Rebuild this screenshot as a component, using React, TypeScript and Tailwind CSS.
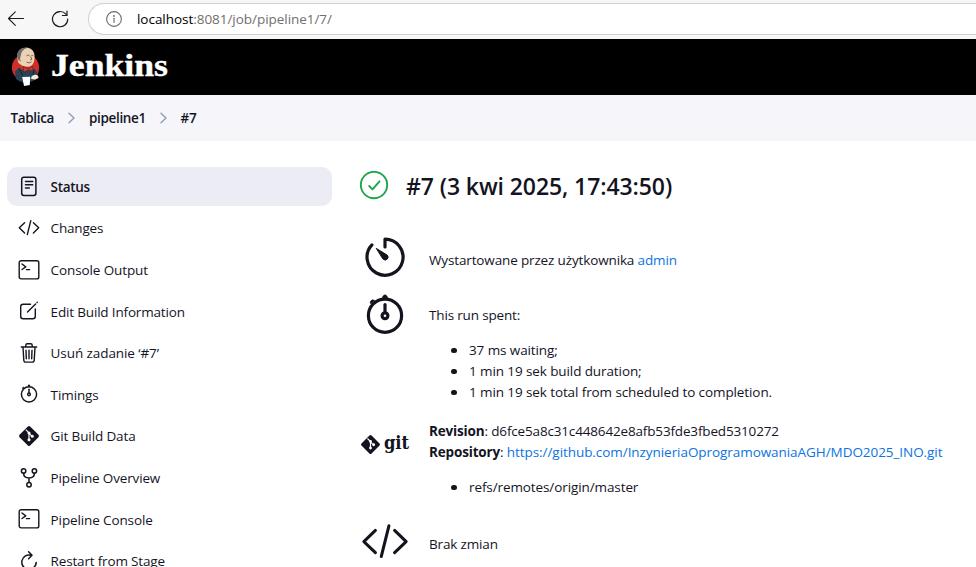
import type { ReactNode } from "react";

type IconProps = { className?: string };

const stroke = {
  fill: "none",
  stroke: "currentColor",
  strokeLinecap: "round" as const,
  strokeLinejoin: "round" as const,
};

function BackIcon() {
  return (
    <svg className="h-4 w-4" viewBox="0 0 16 16" {...stroke} strokeWidth="1.1">
      <path d="M15.5 7.500H.8M7.3 .8.5 7.500l6.8 6.8" />
    </svg>
  );
}

function ReloadIcon() {
  return (
    <svg className="h-[18px] w-[18px]" viewBox="0 0 18 18" {...stroke} strokeWidth="1.2">
      <path d="M16.7 9A7.6 7.6 0 1 1 14.9 4.2M16 1v4.5h-4.6" />
    </svg>
  );
}

function InfoIcon() {
  return (
    <svg className="h-4 w-4 text-[#6b6b6b]" viewBox="0 0 16 16" {...stroke} strokeWidth="1.1">
      <circle cx="8" cy="8" r="7.4" />
      <path d="M8 7.2v4.2" />
      <circle cx="8" cy="4.9" r=".4" fill="currentColor" />
    </svg>
  );
}

function JenkinsLogo() {
  return (
    <svg className="h-10 w-[30px]" viewBox="0 0 30 40">
      <circle cx="14.500" cy="20.500" r="13.600" fill="#cf2f2b" />
      <path d="M5 32 3.800 24.500 8 21l6 3 7-3 4 2 1.500 5-1 4-4.500 2.500-9 1-4-1.500z" fill="#2a4353" />
      <path d="M7.500 16C5 10 6 3.500 11.500 1.300c6-1.800 11.500.7 12 7.200.3 5-.8 8.500-3.500 10.500-3 1.500-8 1-12.500-3z" fill="#ecd2b3" />
      <path d="M7.300 13.500C4.800 9 6.300 3 11 1.300c2-.8 4-.9 5.800-.3-3.600.6-4.800 1.900-6.100 4.200-.8 1.800-.8 3.500-1.400 5.300z" fill="#6d6b6d" />
      <path d="M15.500 8.800c1-1 2.500-.8 3.200.2M20.300 8.800c.8-.7 1.500-.5 2 0M15.500 15c2 1.300 3.500 1 5-.2M19.800 9.500l.9 3-1.500.4M9.300 11.500c-1.500 0-1 2.500.6 2.500" fill="none" stroke="#5b4437" strokeWidth=".8" />
      <path d="m12.300 19.600 4.700 2.100 4.700-2.300.3 4.500-4.600-1-4.600 2.400z" fill="#d33833" stroke="#3b1b1b" strokeWidth=".5" />
      <path d="m8 21 3.500 7.500M23 23.500l-1 4.500" fill="none" stroke="#132530" strokeWidth="1" />
      <path d="m11.200 30 8-.3-.4 8.300-5.800 1z" fill="#fff" />
      <path d="M20.500 29.500c2-2 5-2.500 6.500-.8l.6 2.300-3.500 1.500-4-.6z" fill="#f5e9df" />
    </svg>
  );
}

function Chevron() {
  return (
    <svg className="h-3 w-[7px] text-[#8d9bb0]" viewBox="0 0 7 12" {...stroke} strokeWidth="1.3">
      <path d="m1 1.200 5 4.800-5 4.800" />
    </svg>
  );
}

function DocIcon({ className }: IconProps) {
  return (
    <svg className={className} viewBox="0 0 22 22" {...stroke} strokeWidth="1.5">
      <rect x="3.700" y="1.300" width="14.200" height="18.200" rx="2.200" />
      <path d="M7.500 5.500h7.200M7.500 8.800h7.200M7.500 12.100h3.800" />
    </svg>
  );
}

function CodeIcon({ className }: IconProps) {
  return (
    <svg className={className} viewBox="0 0 22 22" {...stroke} strokeWidth="1.400">
      <path d="M6.600 5.700 1.300 10.800l5.300 5.100M15.400 5.700l5.300 5.100-5.300 5.100M12.800 3.600 9.300 17.600" />
    </svg>
  );
}

function TerminalIcon({ className }: IconProps) {
  return (
    <svg className={className} viewBox="0 0 22 22" {...stroke} strokeWidth="1.400">
      <rect x="1.200" y="1.700" width="19.600" height="18.200" rx="2" />
      <path d="m4 5 3.800 2.900L4 10.500M8.400 10.600h3.200" />
    </svg>
  );
}

function EditIcon({ className }: IconProps) {
  return (
    <svg className={className} viewBox="0 0 22 22" {...stroke} strokeWidth="1.400">
      <path d="M12.500 4.200H5.200a2.500 2.500 0 0 0-2.500 2.500v9.600a2.500 2.500 0 0 0 2.500 2.500h9.600a2.500 2.500 0 0 0 2.500-2.500V9M9.500 12l8.100-8.100M19 2.500l.2-.2" />
    </svg>
  );
}

function TrashIcon({ className }: IconProps) {
  return (
    <svg className={className} viewBox="0 0 22 22" {...stroke} strokeWidth="1.400">
      <path d="M3.300 5h15.400M5 5.300l.8 12.900a2 2 0 0 0 2 1.900h6.400a2 2 0 0 0 2-1.900L17 5.300M7.800 4.800V3.200a1.400 1.400 0 0 1 1.400-1.400h3.600a1.400 1.400 0 0 1 1.400 1.400v1.600M11 8.300v8.500M8 8.300l.3 8.500M14 8.300l-.3 8.500" />
    </svg>
  );
}

function StopwatchIcon({ className }: IconProps) {
  return (
    <svg className={className} viewBox="0 0 48 48" {...stroke} strokeWidth="3.200">
      <circle cx="24" cy="24.700" r="16.600" />
      <circle cx="24" cy="24.700" r="2.900" />
      <path d="M24 13.500v8" />
      <path d="M21.800 7a2.300 2.300 0 1 1 4.400 0zM10 13a2 2 0 1 1 3.600-3.200z" fill="currentColor" strokeWidth="1" />
    </svg>
  );
}

function TimerIcon({ className }: IconProps) {
  return (
    <svg className={className} viewBox="0 0 48 48" {...stroke} strokeWidth="3.200">
      <path d="M10.900 11.900A18 18 0 1 0 24 6.200V14" />
      <path d="m15.600 15.600 10.500 6.400a2.900 2.900 0 1 1-4.100 4.100z" fill="currentColor" strokeWidth="1" />
    </svg>
  );
}

function GitMark({ className }: IconProps) {
  return (
    <svg className={className} viewBox="0 0 22 22">
      <rect x="3.500" y="3.500" width="15" height="15" rx="1.600" transform="rotate(45 11 11)" fill="currentColor" />
      <path d="m7.800 4.700 3.200 3.200v6.800M11 8.200l3.100 3.100" fill="none" stroke="#fff" strokeWidth="1.200" />
      <circle cx="11" cy="7.900" r="1.500" fill="#fff" />
      <circle cx="11" cy="14.700" r="1.500" fill="#fff" />
      <circle cx="14.300" cy="11.300" r="1.500" fill="#fff" />
    </svg>
  );
}

function ForkIcon({ className }: IconProps) {
  return (
    <svg className={className} viewBox="0 0 22 22" {...stroke} strokeWidth="1.500">
      <circle cx="5.600" cy="4" r="2.200" />
      <circle cx="16.400" cy="4" r="2.200" />
      <circle cx="11" cy="17.700" r="2.200" />
      <path d="M5.600 6.300c0 3.700 2.200 4.700 5.400 4.700s5.400-1 5.400-4.700M11 11v4.400" />
    </svg>
  );
}

function RestartIcon({ className }: IconProps) {
  return (
    <svg className={className} viewBox="0 0 22 22" {...stroke} strokeWidth="1.500">
      <path d="M13.200 5.300A7.200 7.200 0 1 0 18.200 12.400M10.600 1.800l3.400 3.500-3.400 3.500" />
    </svg>
  );
}

const tasks = [
  { label: "Status", Icon: DocIcon, text: "tracking-[-0.300px]" },
  { label: "Changes", Icon: CodeIcon, text: "tracking-[-0.180px]" },
  { label: "Console Output", Icon: TerminalIcon, text: "tracking-[-0.110px]" },
  { label: "Edit Build Information", Icon: EditIcon, text: "pt-[2.400px] tracking-[-0.170px]" },
  { label: "Usuń zadanie ‘#7’", Icon: TrashIcon, text: "tracking-[-0.080px]" },
  { label: "Timings", Icon: StopwatchIcon, text: "tracking-[-0.100px]" },
  { label: "Git Build Data", Icon: GitMark, text: "tracking-[-0.130px]" },
  { label: "Pipeline Overview", Icon: ForkIcon, text: "tracking-[-0.150px]" },
  { label: "Pipeline Console", Icon: TerminalIcon, text: "pt-[2.400px] tracking-[-0.120px]" },
  { label: "Restart from Stage", Icon: RestartIcon, text: "tracking-[-0.170px]" },
];

function Row({ icon, className, children }: { icon: ReactNode; className: string; children: ReactNode }) {
  return (
    <div className={`flex ${className}`}>
      <div className="w-[69px] shrink-0">{icon}</div>
      <div className="whitespace-nowrap">{children}</div>
    </div>
  );
}

function Bullets({ items }: { items: string[] }) {
  return (
    <ul className="mt-[14px] pl-[22px] tracking-[-0.100px]">
      {items.map((item) => (
        <li key={item} className="flex items-center">
          <span className="mr-[12.500px] h-[5.500px] w-[5.500px] rounded-full bg-[#14141f]" />
          {item}
        </li>
      ))}
    </ul>
  );
}

export default function App() {
  return (
    <div className="flex h-[567px] w-[976px] flex-col overflow-hidden bg-white font-['Open_Sans',sans-serif] text-[13.500px] leading-[21px] text-[#14141f]">
      <div className="flex h-[39px] shrink-0 items-start bg-[#f7f7f7] pl-2 text-[#1b1b1b]">
        <div className="mt-[11px]"><BackIcon /></div>
        <div className="mt-[10px] ml-[27px]"><ReloadIcon /></div>
        <div className="mt-[3px] ml-[19px] flex h-8 flex-1 items-center rounded-l-full border border-r-0 border-[#cfcfcf] bg-white pl-[17px]">
          <InfoIcon />
          <span className="ml-[15px] tracking-[-0.040px] text-black">
            localhost<span className="text-[#6f6f6f]">:8081/job/pipeline1/7/</span>
          </span>
        </div>
      </div>
      <header className="flex h-14 shrink-0 items-center bg-black pl-[11px]">
        <JenkinsLogo />
        <span className="mb-[3px] ml-[10px] origin-left scale-x-[1.150] font-['Liberation_Serif',serif] text-[31px] font-bold text-white [-webkit-text-stroke:0.400px_white]">Jenkins</span>
      </header>
      <nav className="flex h-[46px] shrink-0 items-center bg-[#f5f5fa] pl-[10.500px] font-semibold tracking-[-0.340px]">
        <span className="w-[57px]">Tablica</span>
        <Chevron />
        <span className="ml-[14.500px] w-[70.500px]">pipeline1</span>
        <Chevron />
        <span className="ml-[14px]">#7</span>
      </nav>
      <div className="flex flex-1">
        <aside className="mt-[26px] ml-[7px] flex h-[414px] w-[325px] flex-col gap-[2.600px]">
          {tasks.map(({ label, Icon, text }, i) => (
            <a key={label} className={`flex h-[39px] shrink-0 items-center rounded-[10px] pl-[11px] ${i === 0 ? "bg-[#ececf5] font-semibold" : ""}`}>
              <Icon className="h-[22px] w-[22px]" />
              <span className={`ml-[10.600px] whitespace-nowrap ${text.includes("pt-") ? "" : "pt-[1.400px]"} ${text}`}>{label}</span>
            </a>
          ))}
        </aside>
        <main className="ml-[28px] flex flex-col pt-[29px] tracking-[-0.160px]">
          <div className="flex h-[32px] items-center">
            <svg className="mb-[2px] h-[29px] w-[29px] text-[#1ea64b]" viewBox="0 0 29 29" {...stroke} strokeWidth="1.900">
              <circle cx="14" cy="14" r="13.200" />
              <path d="m9.200 15 3.300 3.300 7-8" />
            </svg>
            <h1 className="ml-[17px] whitespace-nowrap text-[23px] leading-8 font-semibold tracking-[-0.090px]">#7 (3 kwi 2025, 17:43:50)</h1>
          </div>
          <Row className="mt-[31px] h-[58px]" icon={<TimerIcon className="ml-px h-12 w-12" />}>
            <p className="mt-[17px] tracking-[-0.140px]">Wystartowane przez użytkownika <a className="text-[#0b74e0]">admin</a></p>
          </Row>
          <Row className="h-[125px]" icon={<StopwatchIcon className="ml-px h-12 w-12" />}>
            <p className="mt-[14px]">This run spent:</p>
            <Bullets items={["37 ms waiting;", "1 min 19 sek build duration;", "1 min 19 sek total from scheduled to completion."]} />
          </Row>
          <Row
            className="mt-[5px] h-[99px]"
            icon={
              <div className="mt-[12px] flex h-[22px] items-center">
                <GitMark className="h-[21px] w-[21px]" />
                <span className="mb-[4px] ml-[3px] origin-left scale-x-[0.910] font-['DejaVu_Serif',serif] text-[18px] font-bold">git</span>
              </div>
            }
          >
            <p><b>Revision</b>: d6fce5a8c31c448642e8afb53fde3fbed5310272</p>
            <p><b>Repository</b>: <a className="tracking-[-0.060px] text-[#0b74e0]">https://github.com/InzynieriaOprogramowaniaAGH/MDO2025_INO.git</a></p>
            <Bullets items={["refs/remotes/origin/master"]} />
          </Row>
          <Row className="-mt-[2px]" icon={<CodeIcon className="ml-px h-12 w-12" />}>
            <p className="mt-[16px]">Brak zmian</p>
          </Row>
        </main>
      </div>
    </div>
  );
}
